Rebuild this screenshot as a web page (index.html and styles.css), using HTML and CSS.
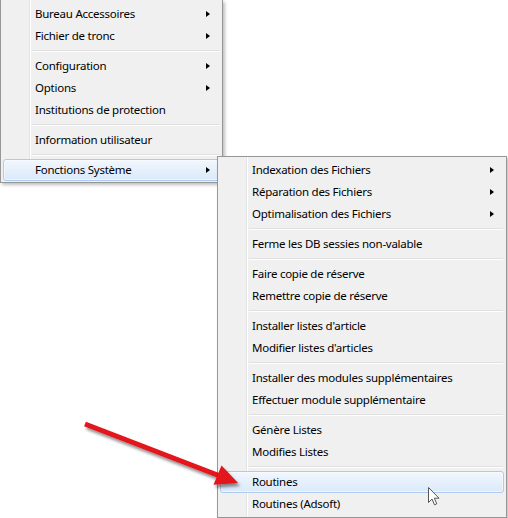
FILE: index.html
```html
<!DOCTYPE html>
<html lang="fr">
<head>
    <meta charset="UTF-8">
    <meta name="viewport" content="width=device-width, initial-scale=1.0">
    <title>Fonctions Système</title>
    <link rel="stylesheet" href="styles.css">
</head>
<body>
    <div class="desk">
        <div class="menu main-menu">
            <div class="item sub">Bureau Accessoires</div>
            <div class="item sub">Fichier de tronc</div>
            <div class="sep"></div>
            <div class="item sub">Configuration</div>
            <div class="item sub">Options</div>
            <div class="item">Institutions de protection</div>
            <div class="sep"></div>
            <div class="item">Information utilisateur</div>
            <div class="sep"></div>
            <div class="item sub hover">Fonctions Système</div>
        </div>

        <div class="menu flyout">
            <div class="item sub">Indexation des Fichiers</div>
            <div class="item sub">Réparation des Fichiers</div>
            <div class="item sub">Optimalisation des Fichiers</div>
            <div class="sep"></div>
            <div class="item">Ferme les DB sessies non-valable</div>
            <div class="sep"></div>
            <div class="item">Faire copie de réserve</div>
            <div class="item">Remettre copie de réserve</div>
            <div class="sep"></div>
            <div class="item">Installer listes d'article</div>
            <div class="item">Modifier listes d'articles</div>
            <div class="sep"></div>
            <div class="item">Installer des modules supplémentaires</div>
            <div class="item">Effectuer module supplémentaire</div>
            <div class="sep"></div>
            <div class="item">Génère Listes</div>
            <div class="item">Modifies Listes</div>
            <div class="sep"></div>
            <div class="item hover">Routines</div>
            <div class="item">Routines (Adsoft)</div>
        </div>

        <!-- flèche rouge qui pointe vers Routines -->
        <svg class="red-arrow" width="508" height="518" viewBox="0 0 508 518">
            <defs>
                <filter id="shade" x="-10%" y="-10%" width="130%" height="140%">
                    <feDropShadow dx="2" dy="3" stdDeviation="1.6" flood-color="#000" flood-opacity="0.45"/>
                </filter>
            </defs>
            <g filter="url(#shade)">
                <line x1="85" y1="424" x2="220" y2="476" stroke="#e3121a" stroke-width="5"/>
                <polygon points="238,483 213.5,484.8 221.5,465.5" fill="#e3121a"/>
            </g>
        </svg>

        <svg class="cursor" width="13" height="20" viewBox="0 0 13 20">
            <path d="M0.5 0.5 L0.5 15.5 L4 12 L6.5 17.8 L8.8 16.8 L6.3 11.2 L11 11.2 Z" fill="#fff" stroke="#555" stroke-width="1" stroke-linejoin="round"/>
        </svg>
    </div>
</body>
</html>
```

FILE: styles.css
```css
body {
    margin: 0;
    background: #fff;
    font-family: 'Noto Sans', 'Open Sans', sans-serif;
    font-size: 11.5px;
    letter-spacing: -0.25px;
    color: #000;
}

.desk {
    position: relative;
    width: 508px;
    height: 518px;
    overflow: hidden;
}

.menu {
    box-sizing: border-box;
    background-color: #f0f0f0;
    background-image: linear-gradient(to right, transparent 0 28px, #e2e3e3 28px 29px, #fff 29px 30px, transparent 30px);
    background-origin: padding-box;
    border: 1px solid #979797;
    padding: 2px;
    box-shadow: 2px 2px 3px rgba(0, 0, 0, 0.25);
}

.main-menu {
    width: 223px;
    border-top: none;
    padding-top: 3px;
    padding-bottom: 1px;
}

.flyout {
    position: absolute;
    left: 217px;
    top: 156px;
    width: 290px;
}

/* 22px par ligne : 19 + 1 + bordures */
.item {
    display: flex;
    align-items: center;
    height: 19px;
    padding: 0 9px 1px 31px;
    border: 1px solid transparent;
    border-radius: 3px;
    white-space: nowrap;
}

.item.sub::after {
    content: "";
    margin-left: auto;
    margin-top: 1px;
    border-left: 4px solid #000;
    border-top: 3.5px solid transparent;
    border-bottom: 3.5px solid transparent;
}

.item.hover {
    border-color: #aecbef;
    background: linear-gradient(#f1f7fe, #dbe9fa);
    box-shadow: inset 0 0 0 1px rgba(255, 255, 255, 0.55);
}

.sep {
    margin: 3px 1px 3px 29px;
    border-top: 1px solid #e0e0e0;
    border-bottom: 1px solid #fff;
}

.red-arrow {
    position: absolute;
    left: 0;
    top: 0;
}

.cursor {
    position: absolute;
    left: 428px;
    top: 487px;
}
```
